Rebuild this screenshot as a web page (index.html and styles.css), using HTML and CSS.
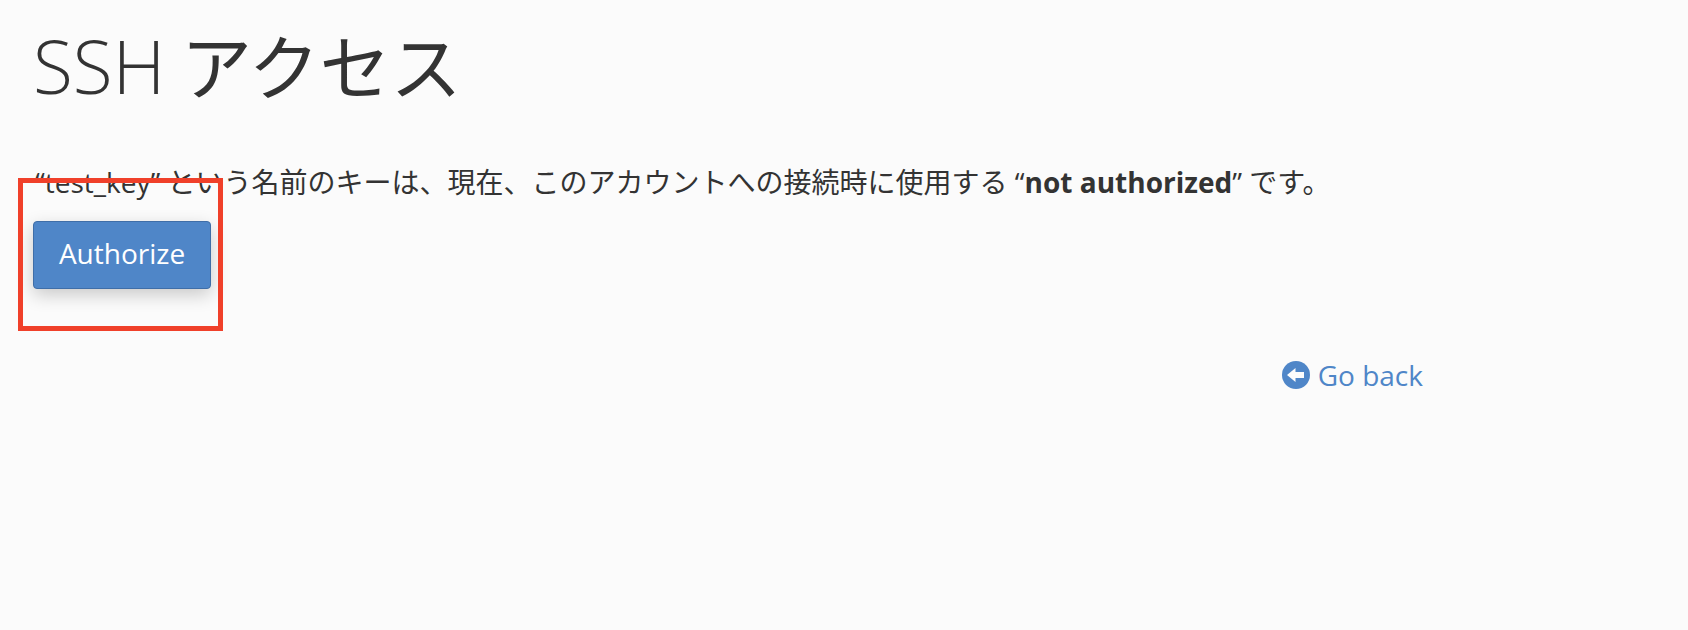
FILE: index.html
```html
<!DOCTYPE html>
<html lang="ja">
<head>
    <meta charset="UTF-8">
    <meta name="viewport" content="width=device-width, initial-scale=1.0">
    <title>SSH アクセス</title>
    <link rel="stylesheet" href="styles.css">
</head>
<body>

<div class="container">
    <h1 class="page-title">SSH <span class="title-ja">アクセス</span></h1>

    <p class="message">“test_key” という名前のキーは、現在、このアカウントへの接続時に使用する “<strong>not authorized</strong>” です。</p>

    <button class="authorize-btn">Authorize</button>

    <div class="back-row">
        <a class="back-link" href="#">
            <svg class="back-icon" viewBox="0 0 28 28" aria-hidden="true">
                <circle cx="14" cy="14" r="14" fill="#4f86c8"/>
                <path d="M5 14 L13.5 7 V11 H22 V17 H13.5 V21 Z" fill="#fcfcfc"/>
            </svg>
            Go back
        </a>
    </div>

    <div class="highlight-box"></div>
</div>

</body>
</html>
```

FILE: styles.css
```css
body {
    font-family: "Open Sans", "Noto Sans CJK JP", sans-serif;
    margin: 0;
    padding: 0;
    background-color: #fbfbfb;
    color: #333;
}
.container {
    position: relative;
    height: 630px;
    padding: 21px 0 0 35px;
    box-sizing: border-box;
    overflow: hidden;
}
.page-title {
    margin: 0 0 0 -2px;
    font-size: 73px;
    line-height: 90px;
    font-weight: 300;
}
.title-ja {
    margin-left: -3px;
    font-size: 71px;
    font-weight: 400;
}
.message {
    margin: 52px 0 0 0;
    font-size: 28px;
    line-height: 36px;
}
.message strong {
    font-weight: 700;
}
.authorize-btn {
    display: block;
    width: 178px;
    height: 68px;
    margin: 21px 0 0 -2px;
    padding: 0 0 5px 0;
    font-family: inherit;
    font-size: 28px;
    color: #fff;
    background-color: #4f86c8;
    border: 1px solid #3f6ea8;
    border-radius: 4px;
    box-shadow: 0 6px 18px rgba(0, 0, 0, 0.2);
}
.back-row {
    display: flex;
    justify-content: flex-end;
    width: 1388px;
    margin-top: 67px;
}
.back-link {
    display: flex;
    align-items: center;
    gap: 8px;
    font-size: 28px;
    color: #4f86c8;
    text-decoration: none;
}
.back-icon {
    width: 28px;
    height: 28px;
}
.highlight-box {
    position: absolute;
    left: 18px;
    top: 178px;
    width: 205px;
    height: 153px;
    box-sizing: border-box;
    border: 5px solid #f0402a;
}
```
